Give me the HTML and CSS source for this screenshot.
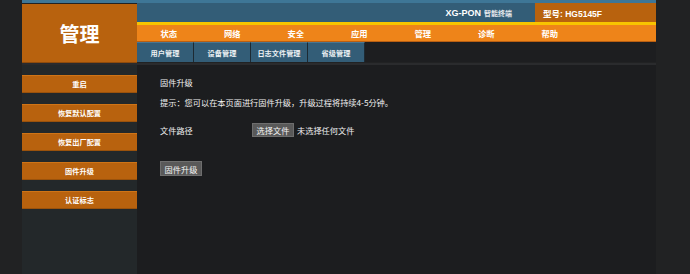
FILE: index.html
```html
<html>

<head>
    <meta charset="utf-8">
    <link rel="stylesheet" href="styles.css">
</head>

<body>
    <div class="page">
        <div class="topline"></div>
        <div class="header">
            <div class="logo">管理</div>
            <div class="header__right">
                <div class="brandbar">
                    <div class="brand">XG-PON <span class="brand__sub">智能终端</span></div>
                    <div class="model">型号: HG5145F</div>
                </div>
                <div class="nav">
                    <div class="nav__item">状态</div>
                    <div class="nav__item">网络</div>
                    <div class="nav__item">安全</div>
                    <div class="nav__item">应用</div>
                    <div class="nav__item">管理</div>
                    <div class="nav__item">诊断</div>
                    <div class="nav__item">帮助</div>
                </div>
                <div class="subnav">
                    <div class="subnav__tab">用户管理</div>
                    <div class="subnav__tab">设备管理</div>
                    <div class="subnav__tab">日志文件管理</div>
                    <div class="subnav__tab">省级管理</div>
                </div>
            </div>
        </div>

        <div class="main">
            <div class="sidebar">
                <div class="sidebar__btn">重启</div>
                <div class="sidebar__btn">恢复默认配置</div>
                <div class="sidebar__btn">恢复出厂配置</div>
                <div class="sidebar__btn">固件升级</div>
                <div class="sidebar__btn">认证标志</div>
            </div>
            <div class="content">
                <div class="content__title">固件升级</div>
                <div class="content__tip">提示：您可以在本页面进行固件升级，升级过程将持续4-5分钟。</div>
                <div class="file-row">
                    <div class="file-row__label">文件路径</div>
                    <div class="btn">选择文件</div>
                    <div class="file-row__name">未选择任何文件</div>
                </div>
                <div class="btn btn--upgrade">固件升级</div>
            </div>
        </div>
    </div>
</body>

</html>
```

FILE: styles.css
```css
body {
    margin: 0;
    background-color: #212223;
    font-family: "Liberation Sans", "Noto Sans CJK SC", sans-serif;
    color: #f0f0f0;
}

.page {
    width: 634px;
    margin-left: 22px;
}

.topline {
    height: 3px;
    background-color: #3e7696;
}

.header {
    display: flex;
    height: 60px;
}

.logo {
    width: 115px;
    height: 58px;
    margin-top: 1px;
    background-color: #b8620e;
    border-bottom: 1px solid #8e4b0c;
    color: #fff;
    font-size: 20px;
    font-weight: bold;
    display: flex;
    align-items: center;
    justify-content: center;
    font-family: "Noto Sans CJK SC", sans-serif;
}

.header__right {
    flex: 1;
    display: flex;
    flex-direction: column;
}

.brandbar {
    height: 19px;
    background-color: #335d77;
    display: flex;
    justify-content: flex-end;
    align-items: stretch;
}

.brand {
    color: #fff;
    font-size: 9px;
    font-weight: bold;
    display: flex;
    align-items: center;
    padding-right: 23px;
}

.brand__sub {
    font-size: 7px;
    margin-left: 3px;
    color: #e4e8ec;
}

.model {
    width: 113px;
    padding-left: 8px;
    background-color: #b8620e;
    color: #fff;
    font-size: 8.5px;
    font-weight: bold;
    display: flex;
    align-items: center;
}

.nav {
    height: 16px;
    display: flex;
    background-color: #ee8419;
    border-top: 3px solid #f8c400;
    border-bottom: 1px solid #b95f12;
}

.nav__item {
    width: 63.5px;
    color: #fff;
    font-size: 8.3px;
    font-weight: bold;
    display: flex;
    align-items: center;
    justify-content: center;
}

.subnav {
    height: 20px;
    display: flex;
    background-color: #1d1e20;
}

.subnav__tab {
    width: 56px;
    background-color: #335d77;
    border-right: 1px solid #1d2a33;
    border-top: 1px solid #4a7690;
    color: #eef2f4;
    font-size: 7.2px;
    font-weight: bold;
    display: flex;
    align-items: center;
    justify-content: center;
}

.main {
    display: flex;
    height: 212px;
    border-top: 2px solid #2a2b2d;
}

.sidebar {
    width: 115px;
    background-color: #23282a;
    padding-top: 10px;
    display: flex;
    flex-direction: column;
    gap: 11px;
}

.sidebar__btn {
    height: 16px;
    background-color: #b8620e;
    border-top: 1px solid #cf7416;
    border-bottom: 1px solid #9a520c;
    color: #fff;
    font-size: 7.2px;
    font-weight: bold;
    display: flex;
    align-items: center;
    justify-content: center;
}

.content {
    flex: 1;
    background-color: #1c1d1f;
    padding-left: 23px;
    padding-top: 11px;
    font-size: 8.2px;
    font-family: "Noto Sans CJK SC", sans-serif;
}

.content__title {
    line-height: 12px;
}

.content__tip {
    line-height: 12px;
    margin-top: 8px;
}

.file-row {
    display: flex;
    align-items: center;
    margin-top: 15px;
}

.file-row__label {
    width: 92px;
}

.file-row__name {
    margin-left: 3px;
}

.btn {
    width: 40px;
    height: 12px;
    background-color: #595959;
    border: 1px solid #6e6e6e;
    color: #f4f4f4;
    font-size: 8.2px;
    display: flex;
    align-items: center;
    justify-content: center;
}

.btn--upgrade {
    height: 13px;
    margin-top: 24px;
}
```
